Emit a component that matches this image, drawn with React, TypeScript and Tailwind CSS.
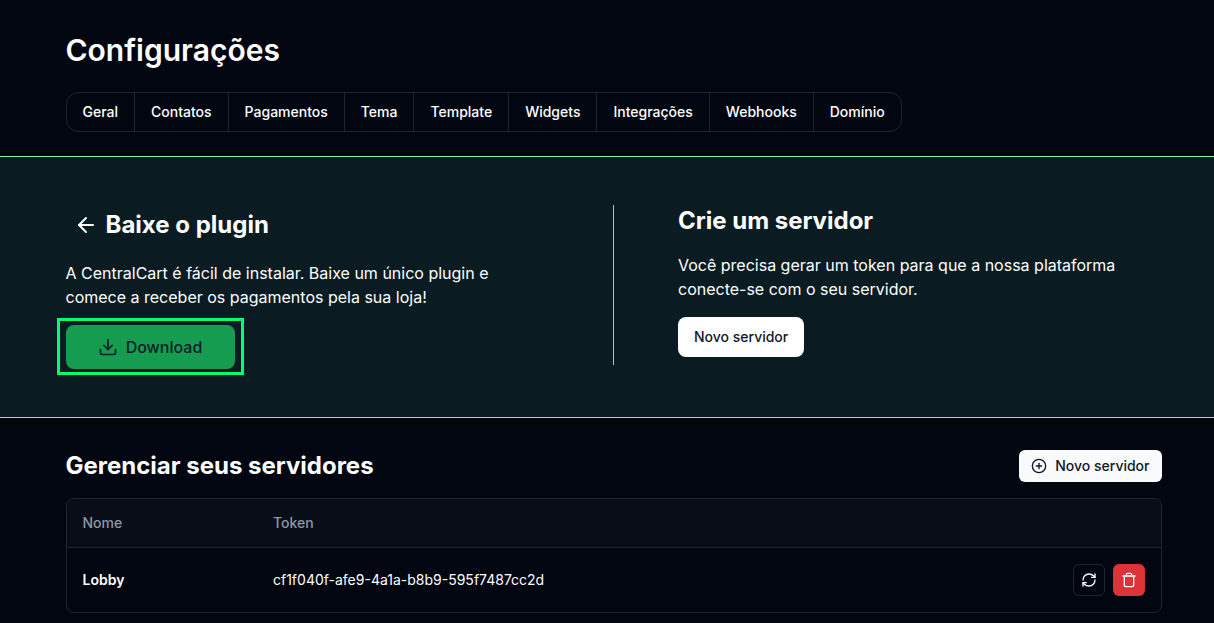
import { ArrowLeft, CirclePlus, Download, RefreshCw, Trash } from 'lucide-react';

const tabs = ['Geral', 'Contatos', 'Pagamentos', 'Tema', 'Template', 'Widgets', 'Integrações', 'Webhooks', 'Domínio'];

export default function App() {
  return (
    <div className="h-screen overflow-hidden bg-[#020611] text-white font-['Inter',sans-serif]">
      {/* Header */}
      <div className="pl-[65.5px] pr-[52px] pt-[31px] pb-6">
        <h1 className="text-3xl leading-[39px] font-semibold">Configurações</h1>
        <div className="mt-[22px] inline-flex h-10 rounded-xl border border-[#1e2633]">
          {tabs.map((tab, i) => (
            <div
              key={tab}
              className={`flex items-center px-4 text-sm font-medium text-white ${i > 0 ? 'border-l border-[#1e2633]' : ''}`}
            >
              {tab}
            </div>
          ))}
        </div>
      </div>

      {/* Tutorial */}
      <section className="h-[262px] border-y border-[#86efac] bg-[#0a1c22] pl-[65.5px] pr-[52px] py-12 flex">
        <div className="w-[548.5px] h-40 border-r border-[#b4c0c4]">
          <div className="flex items-center gap-2 pl-2 h-10">
            <ArrowLeft size={24} strokeWidth={2} />
            <h2 className="text-2xl font-bold">Baixe o plugin</h2>
          </div>
          <p className="mt-4 w-[450px] text-base leading-6 text-white">
            A CentralCart é fácil de instalar. Baixe um único plugin e comece a receber os pagamentos pela sua loja!
          </p>
          <div className="mt-[9px] -ml-[9px] w-[187px] h-[57px] border-[3px] border-[#00ff6e] pt-1 pl-1.5">
            <button className="flex h-[44px] w-[169px] items-center justify-center gap-2 rounded-lg bg-[#159c50] text-base font-medium text-[#0a1c2b]">
              <Download size={20} />
              Download
            </button>
          </div>
        </div>
        <div className="pl-16">
          <h2 className="text-2xl leading-8 font-bold">Crie um servidor</h2>
          <p className="mt-4 w-[460px] text-base leading-6 text-white">
            Você precisa gerar um token para que a nossa plataforma conecte-se com o seu servidor.
          </p>
          <button className="mt-4 h-10 rounded-lg bg-white px-4 text-sm font-medium text-[#0f172a]">Novo servidor</button>
        </div>
      </section>

      {/* Servers */}
      <div className="pl-[65.5px] pr-[52px] pt-8">
        <div className="flex items-center justify-between h-8">
          <h2 className="text-2xl font-bold">Gerenciar seus servidores</h2>
          <button className="flex h-8 items-center gap-2 rounded-md bg-[#f8fafc] px-[12.5px] text-sm font-medium text-[#0f172a]">
            <CirclePlus size={16} />
            Novo servidor
          </button>
        </div>
        <div className="mt-4 rounded-lg border border-[#1e2633] text-sm">
          <div className="flex h-[49px] items-center rounded-t-lg border-b border-[#1e2633] bg-[#090d18] px-4 font-medium text-[#8b98a9]">
            <div className="w-[190.5px]">Nome</div>
            <div>Token</div>
          </div>
          <div className="flex h-16 items-center px-4">
            <div className="w-[190.5px] font-semibold">Lobby</div>
            <div className="text-white">cf1f040f-afe9-4a1a-b8b9-595f7487cc2d</div>
            <div className="ml-auto flex gap-2">
              <button className="flex size-8 items-center justify-center rounded-md border border-[#1e2633]">
                <RefreshCw size={16} />
              </button>
              <button className="flex size-8 items-center justify-center rounded-md bg-[#dc3338]">
                <Trash size={16} />
              </button>
            </div>
          </div>
        </div>
      </div>
    </div>
  );
}
